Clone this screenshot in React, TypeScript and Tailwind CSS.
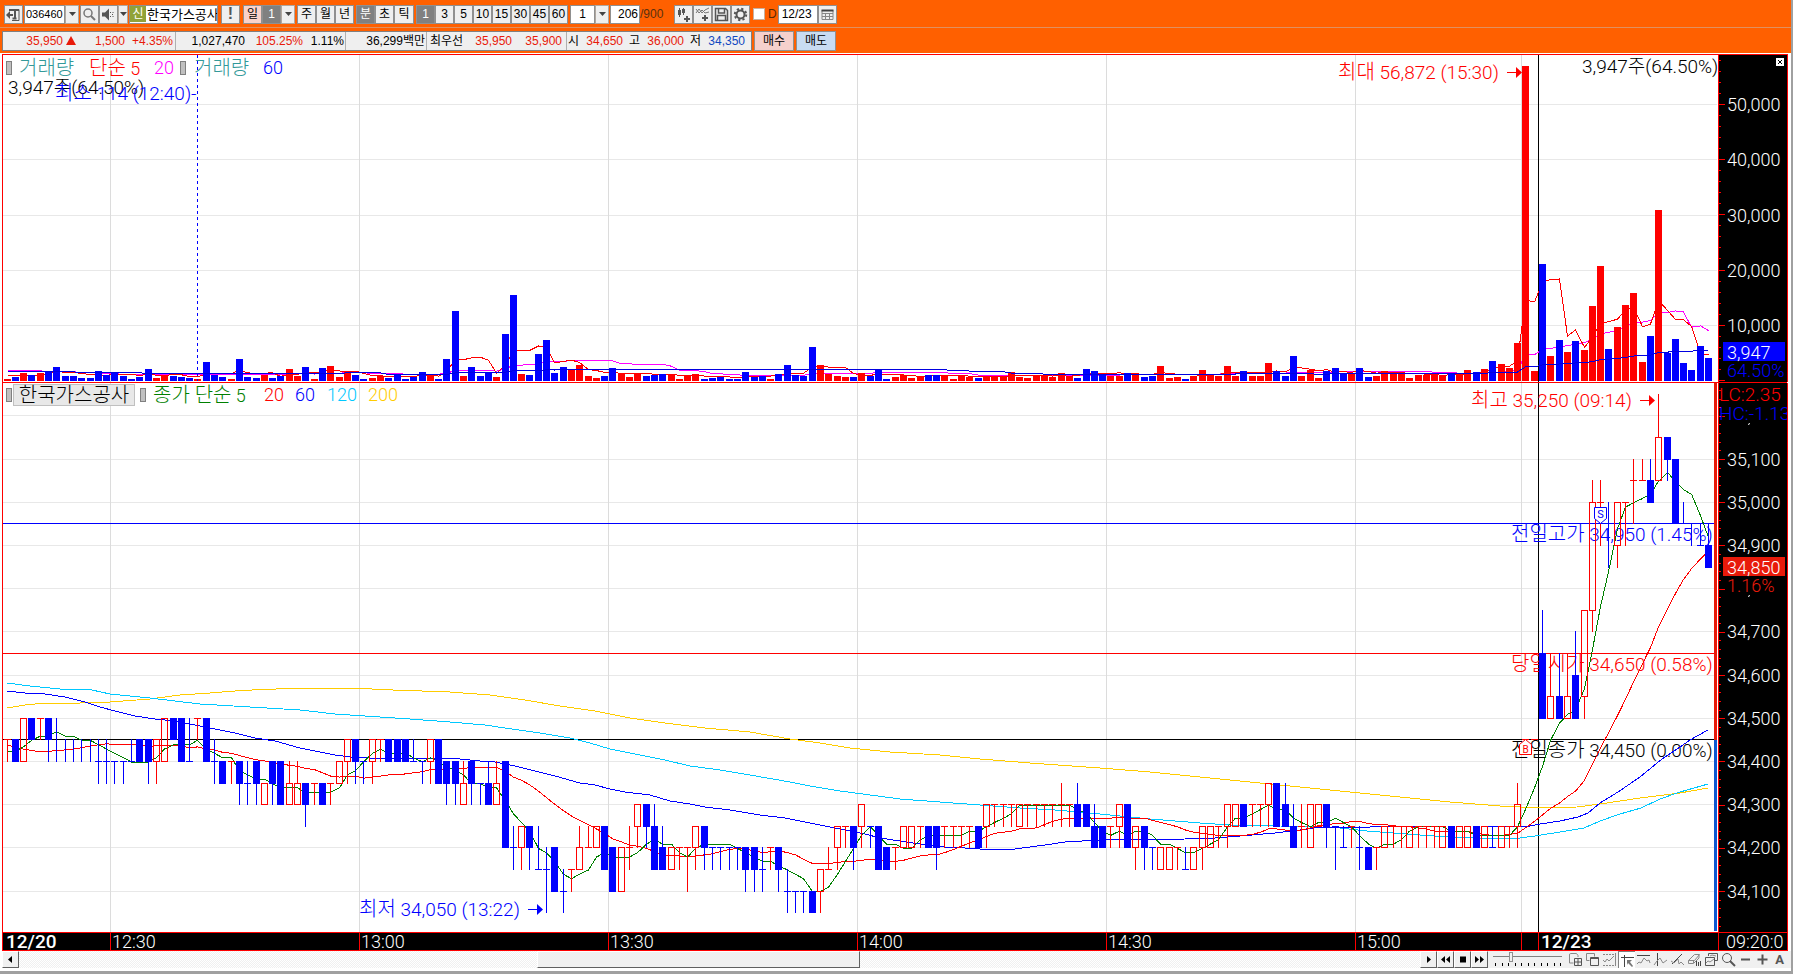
import type { ReactNode } from 'react';

// colour, then body top / body bottom / high / low as base-36 steps of 50 won above 34,000
const CANDLES = `
r9998 b9898 ra8a8 ba9a9 raaa9 ba9a8 b99a8 b9998 b9998 b9998
b9998 b8897 b8897 b8887 b8887 b8898 b9898 b9897 r9897 ra8a8
ba9a9 ba8a8 b88a8 raaa9 ba8a8 b8897 b8787 r8887 b8786 b7786
b8786 r7676 b8786 b8686 r7686 r7686 b7675 r7776 b7676 r7776
r8787 r9897 b9897 b8887 r9897 r9998 b9898 b9898 b9898 b8898
b8887 r9897 b9797 b8786 b8786 r7686 b8786 b7776 b7686 r7686
b8484 b4453 r5453 b5453 b3353 b3341 b4242 b2231 r3332 r4353
r4454 r5454 b5353 b4242 r4242 r4453 r6564 b6564 b5363 b4353
r4343 r4443 r4442 r5453 b5453 b4443 b4443 b4443 b4443 b4342
b4342 b3342 r4443 b4342 b2231 b2221 b2221 b2121 r3231 r3343
r5453 r5554 b5453 r6564 b5554 b5353 b4343 r4443 r5454 r5454
r5554 b5454 b5453 r5554 r5554 r5554 r5554 b5454 r6564 r6665
r6665 r6665 r6565 r6665 r6665 r6665 r6665 r6675 r6665 b6575
b6565 b5464 b5454 r5554 r6564 b6464 r5453 b5453 b4443 r4343
r4343 r4443 b3343 r4343 r5453 r5454 r5554 r6564 r6565 b6565
r6665 r6665 r7675 b7575 b6575 b5464 r5564 r6464 r6565 b6564
b5553 b4454 r5554 b4453 b4343 r4443 r5454 r5554 r5554 r5454
r5554 r5554 r5554 r5454 b5454 r5454 r5454 b5454 r5454 b4454
r5454 r5554 r6574 r9999 r9999 bdafa rbada bbada rbada bcaea
rfbfa rkfle rkkli bjjkh rkikh rkkki rllmj rllml blkml rnlpl
bnmnl bmjmj bjjkj bjjji biiji bihjh`
    .trim()
    .split(/\s+/)
    .map((s) => {
        const [top, bottom, high, low] = s.slice(1).split('').map((c) => parseInt(c, 36));
        return { up: s[0] === 'r', top, bottom, high, low };
    });

// one unit is 60 shares
const VOLUMES = [
    6, 12, 25, 17, 25, 26, 41, 15, 15, 9, 9, 30, 17, 24, 15, 6, 13, 36, 9, 14,
    15, 12, 9, 6, 57, 19, 12, 6, 66, 12, 9, 18, 9, 15, 36, 15, 42, 6, 39, 45,
    12, 27, 18, 6, 9, 14, 9, 21, 6, 12, 27, 15, 6, 66, 210, 15, 42, 15, 23, 12,
    141, 258, 21, 17, 81, 123, 24, 41, 36, 48, 15, 9, 15, 39, 24, 12, 21, 15, 18, 21,
    18, 6, 15, 21, 6, 9, 12, 6, 6, 27, 12, 15, 6, 21, 48, 18, 15, 102, 45, 21,
    15, 12, 12, 24, 15, 33, 6, 12, 17, 9, 12, 18, 18, 15, 6, 15, 12, 9, 12, 11,
    14, 27, 12, 9, 18, 15, 13, 24, 15, 9, 36, 30, 18, 15, 15, 24, 24, 12, 15, 45,
    9, 12, 6, 15, 33, 15, 15, 45, 15, 30, 15, 15, 54, 30, 15, 75, 15, 33, 9, 30,
    39, 20, 24, 39, 12, 15, 30, 24, 26, 9, 18, 17, 18, 15, 21, 18, 33, 27, 36, 60,
    51, 39, 114, 944, 30, 351, 75, 123, 87, 120, 93, 225, 345, 96, 162, 228, 264, 57, 135, 513,
    84, 126, 54, 33, 105, 69,
];

const cx = (i: number) => Math.floor(7 + 8.3 * i);
const priceY = (level: number) => Math.floor(718.3 + (10 - level) * 21.6);

const average = (values: number[], span: number, seed: number[]) =>
    values.map((_, i) =>
        i < seed.length
            ? seed[i]
            : values.slice(Math.max(0, i - span + 1), i + 1).reduce((a, b) => a + b, 0) / Math.min(span, i + 1),
    );

const toPoints = (values: number[], y: (v: number) => number) =>
    values.map((v, i) => `${cx(i) + 0.5},${y(v) + 0.5}`).join(' ');

const closes = CANDLES.map((c) => (c.up ? c.top : c.bottom));
const smoothY = (level: number) => 718.3 + (10 - level) * 21.6;
const PRICE_MA5 = toPoints(average(closes, 5, [8.5, 8.5, 8.7, 9]), smoothY);
const PRICE_MA20 = toPoints(
    average(closes, 20, [8.8, 8.66, 8.6, 8.53, 8.47, 8.5, 8.52, 8.56, 8.6, 8.66, 8.74, 8.8, 8.84, 8.82, 8.8, 8.8, 8.78, 8.72, 8.75]),
    smoothY,
);
const PRICE_MA60 =
    '7,691 25,693 45,694 65,697 85,702 100,707 115,711 135,716 155,719 175,721 195,725 215,729 235,733 255,738 275,741 300,748 315,751 335,755 350,757 370,758 450,758 460,759 480,761 495,762 515,766 535,771 555,776 580,783 595,785 610,789 625,792 650,795 670,801 690,804 705,807 730,810 760,815 785,818 810,823 835,828 850,831 865,834 880,838 900,841 920,844 945,847 965,848 995,850 1015,849 1045,845 1065,842 1100,840 1185,839 1215,838 1240,836 1275,833 1300,830 1320,827 1370,827 1422,826 1480,826 1515,827 1530,826 1540,824 1560,821 1578,817 1588,813 1600,803 1618,792 1640,777 1662,759 1680,747 1690,740 1708,730';
const PRICE_MA120 =
    '7,683 30,686 60,689 92,690 110,694 150,698 175,701 200,704 250,707 300,710 335,714 380,717 410,719 450,722 485,725 505,728 540,733 570,738 590,743 610,749 640,755 665,760 690,766 720,770 750,775 790,782 810,786 840,791 870,795 900,799 940,802 980,805 1020,808 1055,810 1090,813 1120,816 1150,819 1200,823 1230,825 1280,826 1320,827 1340,828 1367,831 1420,835 1450,837 1480,838 1520,838 1535,836 1560,832 1584,828 1600,821 1620,814 1641,808 1660,799 1680,792 1708,784';
const PRICE_MA200 =
    '7,708 25,705 45,703 60,704 80,703 110,702 150,699 180,695 210,693 235,691 252,690 300,688 350,688 393,690 450,692 490,695 525,700 560,706 595,711 630,718 665,723 705,728 750,732 790,739 820,743 850,748 890,752 940,755 980,759 1030,763 1100,768 1150,772 1200,777 1260,783 1310,788 1350,792 1400,797 1450,802 1500,806 1540,808 1577,807 1600,804 1640,798 1680,793 1708,788';

const volumeY = (v: number) => 380 - v / 3;
const VOLUME_MA5 = toPoints(average(VOLUMES, 5, [14, 14, 16]), volumeY);
const VOLUME_MA20 = toPoints(
    average(VOLUMES, 20, [29, 29, 29, 29, 29, 26, 26, 26, 26, 24, 23, 23, 21, 20, 19, 19, 18, 18, 18]),
    volumeY,
);
const VOLUME_MA60 = toPoints(
    average(VOLUMES, 60, Array.from({ length: 60 }, (_, i) => (i < 9 ? 26 : i < 17 ? 23 : i < 41 ? 21 : i < 46 ? 23 : i < 54 ? 18 : 23))),
    volumeY,
);

const HOURS = [
    { x: 110, text: '12:30' },
    { x: 359, text: '13:00' },
    { x: 608, text: '13:30' },
    { x: 857, text: '14:00' },
    { x: 1106, text: '14:30' },
    { x: 1355, text: '15:00' },
];

const SANS = "font-['Roboto','Liberation_Sans','Noto_Sans_CJK_KR',sans-serif]";

function Label({ x, y, ko, text, color, large }: { x: number; y: number; ko?: string; text: string; color: string; large?: boolean }) {
    return (
        <text x={x} y={y} fill={color} xmlSpace="preserve" className={`font-light ${large ? 'text-[19px]' : 'text-[18px]'}`}>
            {ko && <tspan className="text-[20px]">{ko}</tspan>}
            {text}
        </text>
    );
}

function Arrow({ x, y, color }: { x: number; y: number; color: string }) {
    return (
        <g fill={color}>
            <rect x={x} y={y} width="10" height="1" />
            <path d={`M${x + 9} ${y - 5}l6 5.5l-6 5.5z`} />
        </g>
    );
}

function Verticals({ y1, y2 }: { y1: number; y2: number }) {
    return (
        <g shapeRendering="crispEdges">
            {[...HOURS.map((h) => h.x), 1521].map((x) => (
                <rect key={x} x={x} y={y1} width="1" height={y2 - y1} fill="#dcdcdc" />
            ))}
            <rect x="1538" y={y1} width="1" height={y2 - y1} />
        </g>
    );
}

function VolumePane() {
    const labels = [50000, 40000, 30000, 20000, 10000];
    return (
        <svg viewBox="0 53 1791 329" className="block h-auto w-full" role="img" aria-label="거래량 차트">
            <g shapeRendering="crispEdges">
                {labels.map((v, i) => (
                    <rect key={v} x="3" y={Math.round(104 + i * 55.25)} width="1714" height="1" fill="#e8e8e8" />
                ))}
            </g>
            <Verticals y1={55} y2={382} />
            <g fill="none" shapeRendering="crispEdges">
                <polyline points={VOLUME_MA20} stroke="#ff00ff" />
                <polyline points={VOLUME_MA5} stroke="#f00" />
                {VOLUMES.map((v, i) => (
                    <rect key={i} x={cx(i) - 3} y={Math.round(381 - v / 3)} width="7" height={Math.round(v / 3)} fill={CANDLES[i].up ? '#f00' : '#00f'} />
                ))}
                <polyline points={VOLUME_MA60} stroke="#0000e0" />
                <path d="M197.5 55V381" stroke="#00f" strokeDasharray="3 3" />
                <path d="M2.5 382V54.5H1787" stroke="#f00" />
            </g>
            <Label x={8} y={94} text="3,947주(64.50%)" color="#000" large />
            <Label x={55} y={100} ko="최소" text=" 114 (12:40)-" color="#00f" large />
            <Label x={1338} y={79} ko="최대" text=" 56,872 (15:30)" color="#f00" large />
            <Arrow x={1507} y={72} color="#f00" />
            <Label x={1582} y={73} text="3,947주(64.50%)" color="#000" large />
            <rect x="1719" y="55" width="68" height="327" />
            <g fill="#f00" shapeRendering="crispEdges">
                <rect x="1718" y="54" width="1" height="328" />
                <rect x="1787" y="54" width="1" height="328" />
                {Array.from({ length: 30 }, (_, i) => (
                    <rect key={i} x="1719" y={Math.round(380 - i * 11.05)} width={i % 5 ? 2 : 6} height="1" />
                ))}
            </g>
            {labels.map((v, i) => (
                <Label key={v} x={1727} y={Math.round(111 + i * 55.25)} text={v.toLocaleString('en-US')} color="#fff" />
            ))}
            <rect x="1723" y="342" width="62" height="19" fill="#00f" />
            <Label x={1727} y={359} text="3,947" color="#fff" />
            <Label x={1727} y={377} text="64.50%" color="#00f" />
        </svg>
    );
}

function PricePane() {
    const hidden = [35200, 34800];
    const labels = Array.from({ length: 12 }, (_, i) => 35200 - i * 100);
    return (
        <svg viewBox="0 382 1791 550" className="block h-auto w-full" role="img" aria-label="가격 차트">
            <g shapeRendering="crispEdges">
                {labels.map((v) => (
                    <rect key={v} x="3" y={priceY((v - 34000) / 50)} width="1711" height="1" fill="#e8e8e8" />
                ))}
            </g>
            <Verticals y1={383} y2={932} />
            <g shapeRendering="crispEdges">
                <rect x="3" y={priceY(19)} width="1711" height="1" fill="#00f" />
                <rect x="3" y={priceY(13)} width="1711" height="1" fill="#f00" />
                <rect x="3" y={priceY(9)} width="1711" height="1" />
            </g>
            <Label x={1511} y={541} ko="전일고가" text=" 34,950 (1.45%)" color="#00f" large />
            <Label x={1511} y={671} ko="당일시가" text=" 34,650 (0.58%)" color="#f00" large />
            <Label x={1511} y={757} ko="전일종가" text=" 34,450 (0.00%)" color="#000" large />
            <g fill="none" shapeRendering="crispEdges">
                <polyline points={PRICE_MA200} stroke="#fc0" />
                <polyline points={PRICE_MA120} stroke="#00c8ff" />
                <polyline points={PRICE_MA60} stroke="#00f" />
                <polyline points={PRICE_MA20} stroke="#f00" />
                <polyline points={PRICE_MA5} stroke="#008000" />
                {CANDLES.map((c, i) => {
                    const x = cx(i);
                    const top = priceY(c.top);
                    const bottom = priceY(c.bottom);
                    const color = c.up ? '#f00' : '#00f';
                    return (
                        <g key={i} fill={color}>
                            {c.high > c.top && <rect x={x} y={priceY(c.high)} width="1" height={top - priceY(c.high)} />}
                            {c.low < c.bottom && <rect x={x} y={bottom} width="1" height={priceY(c.low) - bottom + 1} />}
                            {c.up && c.top > c.bottom ? (
                                <rect x={x - 2.5} y={top + 0.5} width="6" height={bottom - top} fill="none" stroke={color} />
                            ) : (
                                (c.top > c.bottom || (c.top !== 9 && c.top !== 19) || c.up) && (
                                    <rect x={x - 3} y={top} width="7" height={bottom - top + 1} />
                                )
                            )}
                        </g>
                    );
                })}
                <path d="M2.5 382V932M2 382.5H1787" stroke="#f00" />
            </g>
            <Label x={1471} y={407} ko="최고" text=" 35,250 (09:14)" color="#f00" large />
            <Arrow x={1640} y={400} color="#f00" />
            <Label x={359} y={916} ko="최저" text=" 34,050 (13:22)" color="#00f" large />
            <Arrow x={528} y={909} color="#00f" />

            {/* trade marks */}
            <path d="M1594.5 507.5h12v11l-6 5l-6-5z" fill="#fff" stroke="#00f" />
            <text x="1600.5" y="518" textAnchor="middle" fill="#00f" className="text-[11px]">S</text>
            <path d="M1519.5 754.5h12v-10l-6-5l-6 5z" fill="#fff" stroke="#f00" />
            <text x="1525.5" y="753" textAnchor="middle" fill="#f00" className="text-[10px]">B</text>

            <rect x="1714" y="383" width="3" height="357" fill="#e81a0a" />
            <rect x="1714" y="740" width="3" height="191" fill="#0f58d0" />
            <rect x="1719" y="383" width="68" height="549" />
            <g fill="#f00" shapeRendering="crispEdges">
                <rect x="1718" y="383" width="1" height="549" />
                <rect x="1787" y="383" width="1" height="549" />
                {Array.from({ length: 63 }, (_, i) => (
                    <rect key={i} x="1719" y={Math.round(925.6 - i * 8.64)} width={i % 5 === 4 ? 6 : 2} height="1" />
                ))}
            </g>
            {labels
                .filter((v) => !hidden.includes(v))
                .map((v) => (
                    <Label key={v} x={1727} y={priceY((v - 34000) / 50) + 7} text={v.toLocaleString('en-US')} color="#fff" />
                ))}
            <path d="M1749.5 423l-1 2M1749.5 595l-1 2" stroke="#fff" />
            <rect x="1723" y="557" width="62" height="19" fill="#e81a0a" />
            <Label x={1727} y={574} text="34,850" color="#fff" />
            <Label x={1727} y={592} text="1.16%" color="#e81a0a" />
            <svg x="1719" y="383" width="68" height="50" viewBox="1719 383 68 50">
                <Label x={1719} y={401} text="LC:2.35" color="#f00" large />
                <Label x={1719} y={420} text="HC:-1.13" color="#00f" large />
            </svg>
        </svg>
    );
}

function TimeAxis() {
    return (
        <svg viewBox="0 932 1791 19" className="block h-auto w-full" role="img" aria-label="시간 축">
            <rect x="2" y="932" width="1786" height="19" />
            <g fill="#f00" shapeRendering="crispEdges">
                <rect x="2" y="932" width="1786" height="1" />
                <rect x="2" y="950" width="1786" height="1" />
                {[2, ...HOURS.map((h) => h.x), 1521, 1538, 1718, 1787].map((x) => (
                    <rect key={x} x={x} y="932" width="1" height="19" />
                ))}
            </g>
            {HOURS.map((h) => (
                <Label key={h.x} x={h.x + 2} y={948} text={h.text} color="#fff" />
            ))}
            <text x="6" y="948" fill="#fff" className="text-[19px] font-medium">12/20</text>
            <text x="1541" y="948" fill="#fff" className="text-[19px] font-medium">12/23</text>
            <Label x={1726} y={948} text="09:20:0" color="#fff" />
        </svg>
    );
}

function ToolButton({ children, label, tone = 'plain', wide }: { children: ReactNode; label?: string; tone?: 'plain' | 'pink' | 'dark'; wide?: boolean }) {
    const tones = {
        plain: 'bg-[#efefef] text-black',
        pink: 'bg-[#fad2ca] text-black',
        dark: 'bg-[#808080] text-white',
    };
    return (
        <button
            type="button"
            aria-label={label}
            className={`flex h-[19px] items-center justify-center border border-[#909090] text-[12px] leading-none ${wide ? 'w-5' : 'w-[19px]'} ${tones[tone]}`}
        >
            {children}
        </button>
    );
}

function Caret() {
    return (
        <svg width="7" height="4" viewBox="0 0 7 4" fill="#444">
            <path d="M0 0h7L3.5 4z" />
        </svg>
    );
}

function DropButton({ label }: { label: string }) {
    return (
        <button type="button" aria-label={label} className="flex h-[19px] w-[14px] shrink-0 items-center justify-center border border-[#b0a8a0] bg-[#efefef]">
            <Caret />
        </button>
    );
}

function Icon({ children, size = 15 }: { children: ReactNode; size?: number }) {
    return (
        <svg width={size} height={size} viewBox="0 0 15 15" fill="none" stroke="#555" className="shrink-0">
            {children}
        </svg>
    );
}

function TopToolbar() {
    return (
        <div className="flex h-7 items-center border-b border-[#e09060] pl-1 pt-[1px]">
            <ToolButton label="차트 목록">
                <Icon>
                    <path d="M3 2.5h10v11H6" strokeWidth="1" />
                    <path d="M3 3h10M9 4v7M6.5 11.5h4" strokeWidth="2" />
                    <path d="M0 8l4-4v3h3v2H4v3z" fill="#555" stroke="none" />
                </Icon>
            </ToolButton>
            <div className="ml-[1px] flex">
                <input aria-label="종목코드" defaultValue="036460" className="h-[19px] w-[41px] border border-[#909090] bg-white px-[1px] text-[11px] text-black" />
                <DropButton label="종목 목록" />
            </div>
            <div className="ml-[1px] flex">
                <ToolButton label="종목 검색">
                    <Icon>
                        <circle cx="6" cy="6" r="4" stroke="#777" strokeWidth="1.5" />
                        <path d="M9 9l4 4" stroke="#777" strokeWidth="2" />
                    </Icon>
                </ToolButton>
                <ToolButton label="소리">
                    <Icon>
                        <path d="M1 5.5h3l4-4v12l-4-4H1z" fill="#555" stroke="none" />
                        <path d="M9.5 5v1M9.5 9v1M12 5v1M12 9v1M11 7.5h1" />
                    </Icon>
                </ToolButton>
                <button type="button" aria-label="소리 설정" className="flex h-[19px] w-2.5 items-center justify-center border border-[#b0a8a0] bg-[#efefef]">
                    <Caret />
                </button>
            </div>
            <div className="ml-[1px] flex h-[19px] w-[89px] items-center overflow-hidden border border-[#909090] bg-white">
                <span className="flex h-4 w-4 shrink-0 items-center justify-center bg-[#91a238] text-[12px] leading-none text-white">신</span>
                <span className="ml-[1px] whitespace-nowrap text-[13px] leading-none">한국가스공사</span>
            </div>
            <div className="ml-[3px]">
                <ToolButton label="종목 정보">
                    <span className="text-[16px] font-bold text-[#555]">!</span>
                </ToolButton>
            </div>
            <div className="ml-[3px] flex">
                <ToolButton tone="pink">일</ToolButton>
                <ToolButton tone="dark">1</ToolButton>
                <DropButton label="일 단위" />
            </div>
            <div className="ml-0.5 flex">
                <ToolButton>주</ToolButton>
                <ToolButton>월</ToolButton>
                <ToolButton>년</ToolButton>
            </div>
            <div className="ml-0.5 flex">
                <ToolButton tone="dark">분</ToolButton>
                <ToolButton>초</ToolButton>
                <ToolButton wide>틱</ToolButton>
            </div>
            <div className="ml-0.5 flex">
                <ToolButton tone="dark">1</ToolButton>
                {['3', '5', '10', '15', '30', '45', '60'].map((n) => (
                    <ToolButton key={n}>{n}</ToolButton>
                ))}
            </div>
            <div className="ml-0.5 flex">
                <input aria-label="분 단위" defaultValue="1" className="h-[19px] w-[25px] border border-[#909090] bg-white text-center text-[12px]" />
                <DropButton label="분 단위 목록" />
            </div>
            <input aria-label="표시 개수" defaultValue="206" className="ml-[1px] h-[19px] w-[30px] border border-[#909090] bg-white pr-[1px] text-right text-[12px]" />
            <span className="w-[34px] text-[12px] text-[#5a3010]">/900</span>
            <div className="flex">
                <ToolButton label="봉 추가">
                    <Icon>
                        <path d="M3.5 1v9M7.5 1v7" />
                        <path d="M2 3h3v5H2zM6 2h3v4H6zM10 9h2v2h2v2h-2v2h-2v-2H8v-2h2z" fill="#555" stroke="none" />
                    </Icon>
                </ToolButton>
                <ToolButton label="지표 추가">
                    <Icon>
                        <path d="M1 6l3-4 3 4 3-3 4-2M1 2l3 4 3-3 3 3 4-1" stroke="#777" />
                        <path d="M9 8h2v2h2v2h-2v2H9v-2H7v-2h2z" fill="#555" stroke="none" />
                    </Icon>
                </ToolButton>
                <ToolButton label="저장">
                    <Icon>
                        <path d="M1.5 1.5h10l2 2v10h-12zM4.5 2v4h6V2M3.5 13V8.5h8V13" strokeWidth="1.5" />
                    </Icon>
                </ToolButton>
                <ToolButton label="설정">
                    <Icon>
                        <circle cx="7.5" cy="7.5" r="4" strokeWidth="2" />
                        <circle cx="7.5" cy="7.5" r="5.7" strokeWidth="2" strokeDasharray="2.2 2.28" />
                    </Icon>
                </ToolButton>
            </div>
            <label className="ml-[3px] flex items-center gap-[3px] text-[12px] text-[#5a2a00]">
                <input type="checkbox" className="h-3 w-3 appearance-none border border-[#c8b0a0] bg-white" />D
            </label>
            <div className="ml-[1px] flex">
                <input aria-label="날짜" defaultValue="12/23" className="h-[19px] w-10 border border-[#909090] bg-white px-[3px] text-[12px]" />
                <ToolButton label="달력">
                    <Icon>
                        <path d="M2 3.5h11v9H2zM2 6.5h11M5.5 6v6M9.5 6v6M2 9.5h11" stroke="#888" />
                        <path d="M1.5 3.5h12" stroke="#444" strokeWidth="2" />
                    </Icon>
                </ToolButton>
            </div>
        </div>
    );
}

function QuoteBar() {
    return (
        <div className="flex h-[25px] items-center pl-0.5 text-[12px] leading-none">
            <div className="flex h-5 items-center whitespace-nowrap border border-[#808080] bg-[#efefef] text-[#e81a0a]">
                <span className="w-[60px] text-right">35,950</span>
                <svg width="10" height="9" viewBox="0 0 10 9" fill="#e81a0a" className="ml-[3px]">
                    <path d="M5 0l5 9H0z" />
                </svg>
                <span className="w-[49px] text-right">1,500</span>
                <span className="w-12 text-right">+4.35%</span>
                <span className="ml-0.5 h-[18px] w-[1px] bg-[#b0b0b0]" />
                <span className="w-[69px] text-right text-black">1,027,470</span>
                <span className="w-[58px] text-right">105.25%</span>
                <span className="w-[41px] text-right text-black">1.11%</span>
                <span className="ml-[1px] h-[18px] w-[1px] bg-[#b0b0b0]" />
                <span className="w-[79px] text-right text-black">36,299백만</span>
                <span className="ml-[1px] h-[18px] w-[1px] bg-[#b0b0b0]" />
                <span className="w-[38px] pl-[3px] text-black">최우선</span>
                <span className="w-[47px] text-right">35,950</span>
                <span className="w-[50px] text-right">35,900</span>
                <span className="ml-[4px] h-[18px] w-[1px] bg-[#b0b0b0]" />
                <span className="w-3 pl-[1px] text-black">시</span>
                <span className="w-[44px] text-right">34,650</span>
                <span className="w-[17px] text-right text-black">고</span>
                <span className="w-[44px] text-right">36,000</span>
                <span className="w-[17px] text-right text-black">저</span>
                <span className="mr-1.5 w-[44px] text-right text-[#1048c0]">34,350</span>
            </div>
            <button type="button" className="ml-0.5 h-5 w-10 border border-[#909090] bg-[#f5d0cc]">매수</button>
            <button type="button" className="ml-0.5 h-5 w-10 border border-[#909090] bg-[#c8dcf2]">매도</button>
        </div>
    );
}

function Handle() {
    return <span className="h-[14px] w-[6px] shrink-0 border border-[#808080] bg-[#c0c0c0]" />;
}

function Legends() {
    return (
        <div className="pointer-events-none absolute inset-0 text-[18px] font-light leading-none">
            <div className="absolute left-1.5 top-[5px] flex h-5 items-center whitespace-nowrap">
                <Handle />
                <span className="ml-[7px] w-[70px] text-[20px] text-[#339999]">거래량</span>
                <span className="w-[65px] text-[#f00]"><span className="text-[20px]">단순</span> 5</span>
                <span className="w-[26px] text-[#f0f]">20</span>
                <Handle />
                <span className="ml-2 w-[69px] text-[20px] text-[#339999]">거래량</span>
                <span className="text-[#00f]">60</span>
            </div>
            <div className="absolute left-1.5 top-[331px] flex h-[22px] items-center whitespace-nowrap">
                <Handle />
                <span className="ml-[1px] flex h-[22px] w-[122px] items-center justify-center border border-[#c0c0c0] bg-[#e8e8e8] text-[20px]">한국가스공사</span>
                <span className="ml-[5px] flex"><Handle /></span>
                <span className="ml-[7px] w-[111px] text-[#008000]"><span className="text-[20px]">종가 단순</span> 5</span>
                <span className="w-[31px] text-[#f00]">20</span>
                <span className="w-8 text-[#00f]">60</span>
                <span className="w-[41px] text-[#00c8ff]">120</span>
                <span className="text-[#fc0]">200</span>
            </div>
            <button type="button" aria-label="닫기" className="absolute right-[7px] top-[5px] h-2 w-2 bg-white">
                <svg width="8" height="8" viewBox="0 0 8 8" stroke="#000">
                    <path d="M2 2l4 4M6 2l-4 4" />
                </svg>
            </button>
        </div>
    );
}

function PlayButton({ label, d }: { label: string; d: string }) {
    return (
        <button type="button" aria-label={label} className="flex h-[17px] w-[17px] items-center justify-center border border-b-[#606060] border-l-white border-r-[#606060] border-t-white bg-[#f0f0f0]">
            <svg width="11" height="9" viewBox="0 0 11 9">
                <path d={d} />
            </svg>
        </button>
    );
}

const CHART_TOOLS: { label: string; active?: boolean; art: ReactNode }[] = [
    { label: '창 추가', art: <><path d="M10 5V3.5L8.500 1.500H2.500Q1.500 1.500 1.500 3v8h4" /><path d="M6.500 6.500h7v7h-7zM10 6.500v7M6.500 10h7" stroke="#555" /></> },
    { label: '창 복사', art: <><path d="M4.500 8.500h-3v-7h8v3" /><path d="M5.500 5.500h8v8h-8zM5.500 6.500h8" stroke="#555" /></> },
    { label: '구간', art: <><path d="M1 2.500h12M1 13.500h12" strokeDasharray="2 1" /><path d="M1 8l2 2 2-3 2 2 5-5M13.500 1v13" /></> },
    { label: '추세선', active: true, art: <><path d="M1 4.500h13M4.500 2v12" stroke="#444" /><path d="M7 7h5l-2 2 3 4-1 1-4-4-1 2z" fill="#777" stroke="none" /></> },
    { label: '저항선', art: <><path d="M1 3.500h13" stroke="#444" /><path d="M1 12l2-2 2 1 3-5 3 3 2-1 1 3" /></> },
    { label: '수직선', art: <><path d="M4.500 1v13" stroke="#444" /><path d="M1 13l3-4 3-3 3 5 4-3" /></> },
    { label: '사선', art: <><path d="M2 12L12 2" stroke="#444" /><path d="M1 9l3 2 4-4 1 5 2-2 3 3" /></> },
    { label: '지우개', art: <><path d="M1.500 8.500l6-6h5l-5 6zM1.500 8.500v3h5v-3M7 11l5-5V3" /><path d="M9.500 9v5M11.500 10v4M13.500 9v5" stroke="#444" /></> },
    { label: '차트 겹침', art: <><path d="M4.500 4V1.500h9v7H11M1.500 5.500h9v8h-9z" stroke="#555" /><path d="M2 11l2-2 2 1 4-3M6 4l2-1 4 1" /></> },
    { label: '확대경', art: <><circle cx="6" cy="6" r="4.500" stroke="#555" /><path d="M9 9l5 5" stroke="#555" strokeWidth="2" /></> },
    { label: '축소', art: <path d="M3 7.500h9" stroke="#555" strokeWidth="2" /> },
    { label: '확대', art: <path d="M2.500 7.500h10M7.500 2.500v10" stroke="#555" strokeWidth="2" /> },
];

function BottomBar() {
    return (
        <div className="flex h-5 items-start pl-0.5">
            <PlayButton label="왼쪽으로" d="M7 1v7L3 4.500z" />
            <div className="flex h-[17px] min-w-0 flex-1 bg-[repeating-conic-gradient(#f0f0f0_0_25%,#ffffff_0_50%)] bg-[length:2px_2px]">
                <div className="w-[37%]" />
                <div className="h-[17px] w-[23%] border border-b-[#606060] border-l-white border-r-[#606060] border-t-white bg-[#f0f0f0]" />
            </div>
            <PlayButton label="재생" d="M4 1v7l4-3.500z" />
            <PlayButton label="뒤로" d="M5 1v7L1 4.500zM10 1v7L6 4.500z" />
            <PlayButton label="정지" d="M3 1.500h6v6H3z" />
            <PlayButton label="앞으로" d="M1 1v7l4-3.500zM6 1v7l4-3.500z" />
            <div className="flex h-[17px] w-[303px] shrink-0 bg-[#f0f0f0]">
                <div className="w-[79px] pl-[5px]">
                    <input
                        type="range"
                        aria-label="재생 속도"
                        defaultValue={24}
                        className="block h-3 w-[69px] appearance-none bg-[linear-gradient(#808080,#808080)] bg-[length:100%_1px] bg-[position:0_5px] bg-no-repeat [&::-webkit-slider-thumb]:h-2.5 [&::-webkit-slider-thumb]:w-1 [&::-webkit-slider-thumb]:appearance-none [&::-webkit-slider-thumb]:border [&::-webkit-slider-thumb]:border-[#909090] [&::-webkit-slider-thumb]:bg-[#f0f0f0]"
                    />
                    <svg width="69" height="3" viewBox="0 0 69 3" className="ml-[2px]" shapeRendering="crispEdges">
                        {Array.from({ length: 11 }, (_, i) => (
                            <rect key={i} x={Math.round(i * 6.5)} y="0" width="1" height="3" />
                        ))}
                    </svg>
                </div>
                {CHART_TOOLS.map((tool) => (
                    <button key={tool.label} type="button" aria-label={tool.label} className={`flex h-[17px] w-[17px] items-center justify-center ${tool.active ? 'border-l border-t border-[#808080] bg-white' : ''}`}>
                        <svg width="15" height="15" viewBox="0 0 15 15" fill="none" stroke="#888">
                            {tool.art}
                        </svg>
                    </button>
                ))}
                <button type="button" className="h-[17px] w-[17px] text-[13px] font-bold leading-none text-[#555]">A</button>
            </div>
        </div>
    );
}

export default function App() {
    return (
        <div className={`w-full border-b-[3px] border-r-2 border-[#a0a0a0] bg-white text-black ${SANS}`}>
            <header className="bg-[#ff6000] font-['Liberation_Sans','Noto_Sans_CJK_KR',sans-serif]">
                <TopToolbar />
                <QuoteBar />
            </header>
            <main className="relative">
                <VolumePane />
                <PricePane />
                <TimeAxis />
                <Legends />
            </main>
            <BottomBar />
        </div>
    );
}
